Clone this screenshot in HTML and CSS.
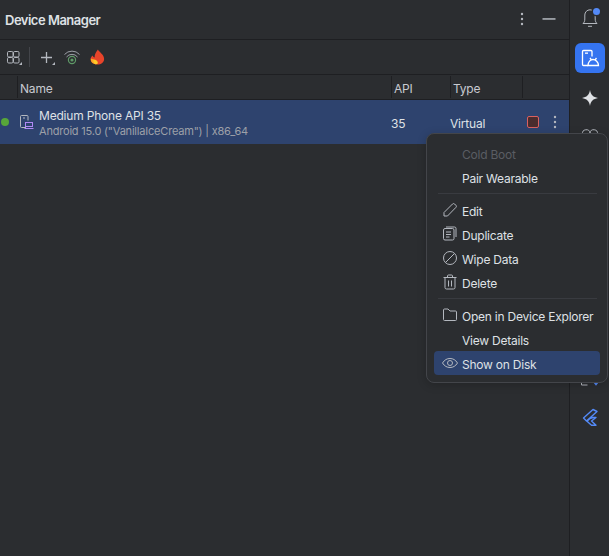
FILE: index.html
```html
<!DOCTYPE html>
<html lang="en">
<head>
<meta charset="utf-8">
<title>Device Manager</title>
<link rel="stylesheet" href="styles.css">
</head>
<body>
<div class="app">
  <main class="panel">
    <header class="titlebar">
      <h1 class="title">Device Manager</h1>
      <div class="title-actions">
        <svg class="ic16" viewBox="0 0 16 16"><circle cx="8" cy="3" r="1.2" class="fill"/><circle cx="8" cy="8" r="1.2" class="fill"/><circle cx="8" cy="13" r="1.2" class="fill"/></svg>
        <svg class="ic16" viewBox="0 0 16 16"><rect x="1.5" y="7.2" width="13" height="1.5" class="fill"/></svg>
      </div>
    </header>
    <div class="toolbar">
      <svg class="ic16 tool" viewBox="0 0 16 16"><g class="line"><rect x="1.5" y="2.5" width="5.500" height="5.500" rx="1.200"/><rect x="7.500" y="2.500" width="5.500" height="5.500" rx="1.200"/><rect x="1.500" y="8.500" width="5.500" height="5.500" rx="1.200"/><rect x="7.500" y="8.500" width="5.500" height="5.500" rx="1.200"/></g><path d="M16 13v3h-3z" class="fill"/></svg>
      <span class="tool-sep"></span>
      <svg class="ic16 tool" viewBox="0 0 16 16"><path d="M7.500 3v11M2 8.500h11" class="line thick"/><path d="M16 13v3h-3z" class="fill"/></svg>
      <svg class="ic16 tool" viewBox="0 0 16 16"><g fill="none" stroke="#9da0a8" stroke-width="1"><path d="M.5 5.500a10 10 0 0 1 15 0"/><path d="M2.500 8a7 7 0 0 1 11 0"/></g><circle cx="8" cy="11" r="3.600" fill="none" stroke="#5f9a68" stroke-width="1.200"/><circle cx="8" cy="11" r="1.600" fill="#5f9a68"/></svg>
      <svg class="ic16 tool" viewBox="1.500 0 12.500 15.500" preserveAspectRatio="none"><path d="M8.500 .5c.6 2.400 4.800 4.700 4.800 9.100 0 3.300-2.300 5.400-5.300 5.400-3.300 0-5.300-2.300-5.300-5 0-1.600.7-3 1.700-3.800.2 1.100.7 1.700 1.500 2C5.600 5.300 7.200 2.700 8.500.5z" fill="#e8442a"/><path d="M3 9.300c1.500.2 3.200 1.400 4.500 5.500C5 15 2.700 13 3 9.300z" fill="#f9a825"/><path d="M4.800 10.300c1.800-.3 3.400 1 3.700 3.500-.6.900-1.500 1.200-2.200 1-1-1.200-1.500-2.800-1.500-4.500z" fill="#ffca28"/></svg>
    </div>
    <div class="thead">
      <div class="th th-status"></div>
      <div class="th th-name">Name</div>
      <div class="th th-api">API</div>
      <div class="th th-type">Type</div>
      <div class="th th-actions"></div>
    </div>
    <div class="row">
      <span class="dot"></span>
      <svg class="ic16 dev" viewBox="0 0 16 16"><path d="M7 13.500H2.500a1 1 0 0 1-1-1v-10a1 1 0 0 1 1-1h5.500a1 1 0 0 1 1 1v4" class="line"/><rect x="4" y="3.500" width="2" height="1" class="fill"/><rect x="6.500" y="8.500" width="7" height="4" fill="none" stroke="#b189f5"/><path d="M5.500 14.500h9" stroke="#b189f5" fill="none"/></svg>
      <div class="dev-text">
        <div class="dev-name">Medium Phone API 35</div>
        <div class="dev-sub">Android 15.0 ("VanillaIceCream") | x86_64</div>
      </div>
      <div class="cell-api">35</div>
      <div class="cell-type">Virtual</div>
      <div class="cell-actions">
        <span class="stop"></span>
        <svg class="ic16" viewBox="0 0 16 16"><circle cx="8" cy="3" r="1.200" class="fill"/><circle cx="8" cy="8" r="1.200" class="fill"/><circle cx="8" cy="13" r="1.200" class="fill"/></svg>
      </div>
    </div>
  </main>
  <aside class="rail">
    <div class="rail-btn bell">
      <svg class="ic20" viewBox="0 0 20 20"><path d="M3 15.500c1-1 1.800-2 1.800-4.500V7a5.200 5.200 0 0 1 10.400 0v4c0 2.500.8 3.500 1.800 4.500z" class="line"/><path d="M8 18.300h4" class="line"/></svg>
      <span class="badge"></span>
    </div>
    <div class="rail-btn active">
      <svg class="ic20" viewBox="0 0 20 20"><g fill="none" stroke="#fff" stroke-width="1.300"><path d="M8 17.500H3.500a1 1 0 0 1-1-1v-13a1 1 0 0 1 1-1H11a1 1 0 0 1 1 1v5"/><path d="M8 17.500c0-3.500 2.500-6 5-6s5.500 2.500 5.500 6z"/><path d="M10 10l1.500 2M16.500 10L15 12"/></g><rect x="5" y="4.500" width="3" height="1.300" fill="#fff"/></svg>
    </div>
    <div class="rail-btn">
      <svg class="ic20" viewBox="0 0 20 20"><path d="M10 2c.8 4.800 3.200 7.200 8 8-4.800.8-7.200 3.200-8 8-.8-4.800-3.200-7.200-8-8 4.800-.8 7.200-3.200 8-8z" fill="#dfe1e5"/></svg>
    </div>
    <div class="rail-btn">
      <svg class="ic20" viewBox="0 0 20 20"><path d="M2.500 6a3.500 3.500 0 0 1 7.500-1 3.500 3.500 0 0 1 7.500 1c0 3-3 5-7.500 8-4.500-3-7.500-5-7.500-8z" class="line"/></svg>
    </div>
    <div class="rail-gap"></div>
    <div class="rail-btn">
      <svg class="ic20" viewBox="0 0 20 20"><path d="M1.500 11v6h6" class="line"/><path d="M14 14l2 2.500 2-2.500" fill="none" stroke="#548af7" stroke-width="1.500"/></svg>
    </div>
    <div class="rail-btn">
      <svg class="ic20" viewBox="0 0 20 20"><path d="M13 1.500L3.500 10l3 3L17 3.500z M10 10.500l-3 2.800 4.500 4h4.500L11.500 13 16 9.500h-3z" fill="none" stroke="#548af7" stroke-width="1.400" stroke-linejoin="round"/></svg>
    </div>
  </aside>
</div>
<div class="menu">
  <div class="mi disabled"><span class="mi-ic"></span>Cold Boot</div>
  <div class="mi"><span class="mi-ic"></span>Pair Wearable</div>
  <div class="msep"></div>
  <div class="mi"><span class="mi-ic"><svg class="ic16" viewBox="0 0 16 16"><path d="M2 14v-3.500L10.500 2a1.500 1.500 0 0 1 2.100 0l1.300 1.300a1.500 1.500 0 0 1 0 2.100L5.500 14z" class="line"/></svg></span>Edit</div>
  <div class="mi"><span class="mi-ic"><svg class="ic16" viewBox="0 0 16 16"><rect x="1.500" y="2.500" width="10.500" height="11.500" rx="1.500" class="line"/><path d="M4 1h8.500A1.500 1.500 0 0 1 14 2.500V11M4 6h5M4 8.500h5M4 11h3.500" class="line"/></svg></span>Duplicate</div>
  <div class="mi"><span class="mi-ic"><svg class="ic16" viewBox="0 0 16 16"><circle cx="8" cy="8" r="6.500" class="line"/><path d="M3.500 12.500l9-9" class="line"/></svg></span>Wipe Data</div>
  <div class="mi"><span class="mi-ic"><svg class="ic16" viewBox="0 0 16 16"><path d="M1.500 3.500h13M5.500 3.500V2a1 1 0 0 1 1-1h3a1 1 0 0 1 1 1v1.500M3 3.500v10a1.500 1.500 0 0 0 1.500 1.500h7a1.500 1.500 0 0 0 1.500-1.500v-10M6.500 6.500v6M9.500 6.500v6" class="line"/></svg></span>Delete</div>
  <div class="msep"></div>
  <div class="mi"><span class="mi-ic"><svg class="ic16" viewBox="0 0 16 16"><path d="M1.500 3a1 1 0 0 1 1-1h3.500l2 2h5.500a1 1 0 0 1 1 1v7.500a1 1 0 0 1-1 1h-11a1 1 0 0 1-1-1z" class="line"/></svg></span>Open in Device Explorer</div>
  <div class="mi"><span class="mi-ic"></span>View Details</div>
  <div class="mi selected"><span class="mi-ic"><svg class="ic16" viewBox="0 0 16 16"><path d="M.5 8C2.500 4.800 5 3.500 8 3.500s5.500 1.300 7.500 4.500c-2 3.200-4.500 4.500-7.500 4.500S2.500 11.200.5 8z" class="line"/><circle cx="8" cy="8" r="2.500" class="line"/></svg></span>Show on Disk</div>
</div>
</body>
</html>
```

FILE: styles.css
```css
* { box-sizing: border-box; }
html, body { margin: 0; height: 100%; overflow: hidden; }
body {
  background: #2b2d30;
  color: #dfe1e5;
  font-family: Inter, "Noto Sans", sans-serif;
  font-size: 12px;
  letter-spacing: -0.2px;
  position: relative;
}
.app { display: flex; height: 556px; }
.panel { width: 570px; border-right: 1px solid #1e1f22; display: flex; flex-direction: column; }
.rail { width: 39px; display: flex; flex-direction: column; align-items: center; padding-top: 3px; gap: 10px; }

.fill { fill: #b4b8bf; }
.line { fill: none; stroke: #b4b8bf; stroke-width: 1; }
.line.thick { stroke-width: 1.3; }
.ic16 { width: 16px; height: 16px; display: block; flex: none; }
.ic20 { width: 20px; height: 20px; display: block; }

.titlebar { height: 40px; border-bottom: 1px solid #1e1f22; display: flex; align-items: center; justify-content: space-between; padding: 0 12px 0 5px; }
.title { margin: 0; font-size: 13px; font-weight: 600; letter-spacing: -0.5px; color: #dfe1e5; }
.title-actions { display: flex; gap: 11px; margin-bottom: 2px; }

.toolbar { height: 35px; border-bottom: 1px solid #1e1f22; display: flex; align-items: center; padding: 0 0 0 6px; }
.tool-sep { width: 1px; height: 20px; background: #43454a; margin: 0 9px 0 -2px; }
.tool { margin-right: 9px; }

.thead { height: 25px; border-bottom: 1px solid #1e1f22; display: flex; color: #c8cad0; }
.th { height: 22px; margin-top: 1px; border-right: 1px solid #1e1f22; padding-left: 2px; line-height: 25px; }
.th-status { width: 18px; }
.th-name { width: 374px; }
.th-api { width: 59px; }
.th-type { width: 72px; }
.th-actions { flex: 1; border-right: none; }

.row { height: 44px; background: #2e436e; display: flex; align-items: center; }
.dot { width: 8px; height: 8px; border-radius: 50%; background: #57a639; margin: 0 10px 0 1px; }
.dev { margin-right: 4px; }
.dev-text { width: 352px; padding-top: 2px; }
.dev-name { font-size: 12px; line-height: 16px; color: #dfe1e5; }
.dev-sub { font-size: 11px; line-height: 14px; color: #9da0a8; white-space: nowrap; }
.cell-api { width: 59px; padding-top: 2px; }
.cell-type { width: 77px; padding-top: 2px; }
.cell-actions { display: flex; align-items: center; gap: 8px; }
.stop { width: 12px; height: 12px; background: #4a2c2e; border: 1px solid #d9605f; border-radius: 2px; }

.rail-btn { width: 30px; height: 30px; display: flex; align-items: center; justify-content: center; position: relative; flex: none; }
.rail-btn.active { background: #3574f0; border-radius: 6px; }
.rail-gap { height: 190px; }
.badge { position: absolute; top: 5px; right: 5px; width: 7px; height: 7px; background: #548af7; border-radius: 50%; box-shadow: 0 0 0 1.5px #2b2d30; }

.menu {
  position: absolute; left: 426px; top: 133px; width: 182px; height: 250px;
  background: #2b2d30; border: 1px solid #43454a; border-radius: 8px;
  padding: 8px 7px 7px;
  box-shadow: 0 2px 10px rgba(0,0,0,.2);
  letter-spacing: -0.23px;
}
.mi { height: 24px; display: flex; align-items: center; border-radius: 4px; color: #dfe1e5; white-space: nowrap; }
.mi-ic { width: 28px; padding-left: 8px; flex: none; height: 16px; margin-top: -2px; }
.mi.disabled { color: #5a5d63; }
.mi.selected { background: #2e436e; margin-top: -1px; padding-top: 2px; }
.msep { height: 1px; background: #393b40; margin: 3px 3px 5px 4px; }
```
